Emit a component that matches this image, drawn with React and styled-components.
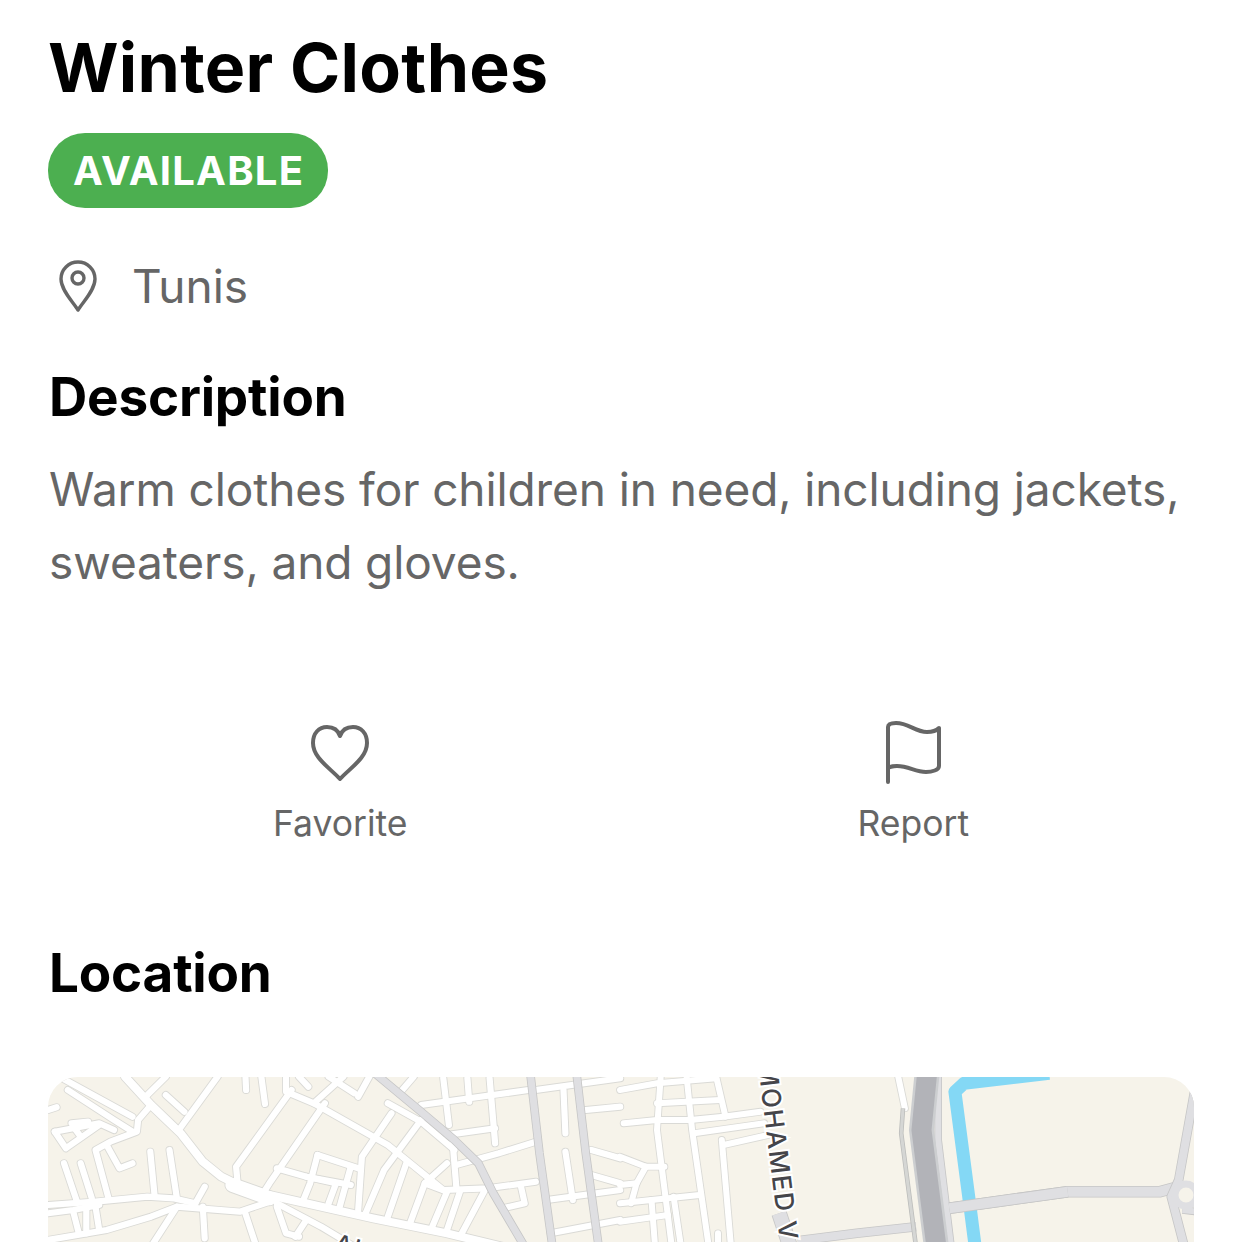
import React from 'react'
import styled, { createGlobalStyle } from 'styled-components'

const GlobalStyle = createGlobalStyle`
  html, body {
    margin: 0;
    padding: 0;
    height: 1242px;
    overflow: hidden;
    background: #fff;
    font-family: Inter, "Noto Sans", sans-serif;
  }
`

const Page = styled.div`
  height: 1242px;
  overflow: hidden;
  box-sizing: border-box;
  padding: 28px 48px 0;
`
const Title = styled.h1`
  margin: 0;
  font-size: 68px;
  line-height: 78px;
  font-weight: 700;
  letter-spacing: 0.3px;
  color: #000;
`
const Badge = styled.div`
  width: fit-content;
  margin-top: 27px;
  padding: 0 24px 0 25px;
  height: 75px;
  line-height: 75px;
  border-radius: 37px;
  background: #4caf50;
  color: #fff;
  font-size: 40px;
  font-weight: 700;
  letter-spacing: 1.2px;
`
const Place = styled.div`
  display: flex;
  align-items: center;
  gap: 35px;
  margin: 52px 0 0 11px;
  height: 52px;
  font-size: 46px;
  color: #666;
`
const Heading = styled.h2`
  margin: ${(p) => p.$top}px 0 0 1px;
  font-size: 53px;
  line-height: 60px;
  font-weight: 700;
  letter-spacing: -0.2px;
  color: #000;
`
const Body = styled.p`
  margin: 26px 0 0 1px;
  font-size: 46px;
  line-height: 72.6px;
  letter-spacing: -0.1px;
  color: #666;
`
const Actions = styled.div`
  display: flex;
  justify-content: space-around;
  margin-top: 123px;
`
const Action = styled.div`
  display: flex;
  flex-direction: column;
  align-items: center;
  gap: 17px;
  font-size: 35.5px;
  line-height: 44px;
  color: #666;
`
const ActionIcon = styled.div`
  display: flex;
  align-items: center;
  justify-content: center;
  height: 64px;
`
const MapBox = styled.div`
  margin-top: 74px;
  height: 400px;
  border-radius: 30px;
  overflow: hidden;
  background: #f6f3ea;
`
const MapSvg = styled.svg`
  display: block;
  width: 1146px;
  height: 400px;
`
const MapLabel = styled.text`
  font-family: Inter, sans-serif;
  font-size: ${(p) => p.$size}px;
  font-weight: 500;
  letter-spacing: 1.6px;
  fill: #45454a;
  stroke: #fff;
  stroke-width: 4px;
  paint-order: stroke;
`

// road polylines, in page pixels
const Z3 = (pts) => pts.map(([x, y]) => `${(40 + x * 0.37).toFixed(1)},${(1070 + y / 3).toFixed(1)}`).join(' ')
const Z4 = (pts) => pts.map(([x, y]) => `${(620 + x * 0.37).toFixed(1)},${(1070 + y / 3).toFixed(1)}`).join(' ')

const mainRoad = [[230, 20], [300, 105], [380, 190], [440, 275], [490, 320], [545, 350], [620, 375], [900, 445], [1100, 490], [1250, 530]]

const streets = [
  // left part
  mainRoad,
  [[60, 25], [250, 140]],
  [[75, 60], [200, 150], [250, 185]],
  [[300, 105], [265, 150], [262, 185], [190, 215], [150, 240], [185, 385]],
  [[340, 20], [290, 75]],
  [[480, 20], [375, 180]],
  [[340, 75], [390, 125]],
  [[555, 10], [557, 60]],
  [[597, 10], [608, 102]],
  [[22, 120], [45, 112]],
  [[40, 185], [160, 160], [200, 180]],
  [[40, 185], [70, 235], [160, 165]],
  [[85, 160], [130, 155]],
  [[90, 170], [110, 200]],
  [[180, 225], [215, 295], [250, 280]],
  [[65, 280], [100, 395]],
  [[110, 280], [140, 385]],
  [[298, 245], [310, 380]],
  [[350, 240], [370, 385]],
  [[22, 405], [150, 395], [290, 380], [360, 385], [420, 400]],
  [[22, 430], [90, 420], [160, 405]],
  [[90, 425], [105, 490]],
  [[125, 420], [125, 490]],
  [[150, 410], [160, 480]],
  [[22, 510], [180, 480], [300, 440], [370, 410], [540, 425], [620, 395]],
  [[370, 410], [300, 530]],
  [[445, 350], [420, 400]],
  [[440, 410], [445, 505]],
  [[555, 430], [585, 530]],
  [[640, 400], [760, 470], [850, 530]],
  [[640, 410], [665, 490], [700, 500]],
  [[720, 450], [690, 500]],
  [[665, 20], [665, 65], [740, 100], [820, 20]],
  [[680, 60], [530, 290], [535, 350]],
  [[770, 100], [620, 340], [600, 375]],
  [[700, 20], [725, 50]],
  [[740, 100], [940, 225], [1090, 360], [1210, 355], [1340, 335]],
  [[780, 20], [850, 70]],
  [[890, 20], [860, 80]],
  [[1010, 20], [975, 65]],
  [[940, 100], [1030, 155], [1120, 240]],
  [[950, 130], [870, 260], [860, 420]],
  [[1030, 150], [930, 300], [880, 430]],
  [[990, 280], [940, 440]],
  [[1040, 340], [1000, 460]],
  [[1100, 280], [1040, 340], [1100, 365], [1060, 470]],
  [[1135, 365], [1100, 480]],
  [[1200, 365], [1140, 490]],
  [[1115, 215], [1125, 350]],
  [[1030, 105], [1320, 60]],
  [[1090, 25], [1105, 165]],
  [[1155, 25], [1160, 95]],
  [[1215, 25], [1230, 220]],
  [[1100, 195], [1230, 175]],
  [[1125, 285], [1240, 250], [1340, 215]],
  [[750, 255], [860, 295]],
  [[750, 255], [730, 340], [710, 395]],
  [[640, 295], [720, 320], [840, 345]],
  [[720, 320], [800, 340], [780, 400]],
  [[840, 290], [810, 410]],
  [[1250, 415], [1310, 400], [1300, 350]],
  [[1340, 60], [1568, 25]],
  [[1415, 60], [1420, 190]],
  [[1420, 245], [1440, 390]],
  [[1370, 390], [1568, 360]],
  [[1380, 490], [1568, 450]],
  [[1475, 120], [1568, 110]],
  [[1490, 240], [1568, 265]],
  [[1490, 315], [1568, 340]]
]

const streetsRight = [
  [[0, 60], [100, 40], [260, 25]],
  [[110, 20], [100, 180], [140, 530]],
  [[180, 20], [195, 180], [240, 530]],
  [[260, 20], [285, 140]],
  [[10, 160], [100, 150], [190, 150], [280, 140], [380, 125]],
  [[100, 100], [270, 90]],
  [[200, 190], [390, 160]],
  [[275, 210], [300, 530]],
  [[280, 225], [400, 195]],
  [[0, 260], [70, 290], [120, 290]],
  [[70, 290], [45, 340], [30, 400]],
  [[0, 345], [45, 340]],
  [[0, 400], [215, 375]],
  [[0, 455], [130, 435]],
  [[85, 390], [95, 530]],
  [[145, 380], [165, 530]],
  [[265, 490], [265, 530]],
  [[750, 10], [770, 115]]
]

const greyRoads = [
  { pts: Z3([[905, 10], [1030, 125], [1120, 210], [1185, 280], [1225, 370], [1310, 530]]), w: 7 },
  { pts: Z3([[1325, 10], [1350, 250], [1385, 530]]), w: 7 },
  { pts: Z3([[1450, 10], [1475, 250], [1510, 530]]), w: 7 },
  { pts: Z4([[480, 512], [640, 490], [800, 470]]), w: 8 },
  { pts: Z4([[890, 415], [1210, 365], [1460, 365], [1510, 350]]), w: 10 },
  { pts: Z4([[1560, 20], [1510, 330], [1490, 380], [1525, 530]]), w: 8 },
  { pts: Z4([[1520, 420], [1560, 425]]), w: 6 },
  { pts: Z4([[860, 10], [860, 210], [895, 530]]), w: 6 },
  { pts: Z4([[430, 430], [460, 530]]), w: 14 }
]

function Road({ pts, color, casing, width }) {
  return (
    <g fill="none" strokeLinejoin="round" strokeLinecap="butt">
      <polyline points={pts} stroke={casing} strokeWidth={width + 1.6} />
      <polyline points={pts} stroke={color} strokeWidth={width} />
    </g>
  )
}

function StreetLayer({ color, extra }) {
  return (
    <g fill="none" stroke={color} strokeLinejoin="round" strokeLinecap="round">
      <polyline points={Z3(mainRoad)} strokeWidth={8 + extra} />
      <polyline points={Z3([[520, 345], [620, 385]])} strokeWidth={14 + extra} />
      {streets.map((s, i) => (
        <polyline key={i} points={Z3(s)} strokeWidth={6.2 + extra} />
      ))}
      {streetsRight.map((s, i) => (
        <polyline key={i} points={Z4(s)} strokeWidth={6 + extra} />
      ))}
    </g>
  )
}

function MapArt() {
  return (
    <MapSvg viewBox="48 1077 1146 400">
      <StreetLayer color="#dadad6" extra={1.8} />
      <StreetLayer color="#fff" extra={0} />
      {greyRoads.map((r, i) => (
        <Road key={i} pts={r.pts} color="#dfdfe2" casing="#c6c6c6" width={r.w} />
      ))}
      {/* roundabout */}
      <circle cx="1186" cy="1195" r="11" fill="#f6f3ea" stroke="#dfdfe2" strokeWidth="7" />
      {/* canal */}
      <polyline points={Z4([[1160, 10], [930, 40], [905, 65], [945, 400], [960, 530]])} fill="none" stroke="#84d8f5" strokeWidth="13" strokeLinejoin="round" />
      <Road pts={Z4([[890, 415], [1210, 365]])} color="#dfdfe2" casing="#c6c6c6" width={10} />
      {/* motorway */}
      <Road pts={Z4([[765, 115], [760, 190], [800, 530]])} color="#d5d6d4" casing="#bcbdbb" width={3} />
      <polyline points={Z4([[830, 10], [815, 180], [855, 530]])} fill="none" stroke="#ccced0" strokeWidth="25" />
      <polyline points={Z4([[830, 10], [815, 180], [855, 530]])} fill="none" stroke="#b2b3b8" strokeWidth="20" />
      <MapLabel $size={26} transform="translate(758 1064) rotate(83)">MOHAMED V</MapLabel>
      <MapLabel $size={24} transform="translate(333 1250) rotate(16)">AL</MapLabel>
    </MapSvg>
  )
}

function App() {
  return (
    <>
      <GlobalStyle />
      <Page>
        <Title>Winter Clothes</Title>
        <Badge>AVAILABLE</Badge>
        <Place>
          <svg width="38" height="52" viewBox="0 0 38 52" fill="none" stroke="#666" strokeWidth="3.4" strokeLinejoin="round">
            <path d="M19 50 C14 42 2 30 2 19 A17 17 0 0 1 36 19 C36 30 24 42 19 50Z" />
            <circle cx="19" cy="18" r="6" />
          </svg>
          <span>Tunis</span>
        </Place>
        <Heading $top={55}>Description</Heading>
        <Body>Warm clothes for children in need, including jackets, sweaters, and gloves.</Body>
        <Actions>
          <Action>
            <ActionIcon>
              <svg width="58" height="56" viewBox="0 0 58 56" fill="none" stroke="#666" strokeWidth="4" strokeLinejoin="round">
                <path d="M29 54 C19 43 2 33 2 18 C2 8 8 2 16 2 C22 2 27 5 29 11 C31 5 36 2 42 2 C50 2 56 8 56 18 C56 33 39 43 29 54Z" />
              </svg>
            </ActionIcon>
            <span>Favorite</span>
          </Action>
          <Action>
            <ActionIcon>
              <svg width="56" height="64" viewBox="0 0 56 64" fill="none" stroke="#666" strokeWidth="4" strokeLinejoin="round" strokeLinecap="round">
                <path d="M3 61 V6 C3 3 6 2 11 2 C24 2 30 11 42 11 C47 11 51 10 54 7 V45 C54 49 47 51 41 51 C30 51 24 45 12 45 C8 45 3 46 3 48" />
              </svg>
            </ActionIcon>
            <span>Report</span>
          </Action>
        </Actions>
        <Heading $top={97}>Location</Heading>
        <MapBox>
          <MapArt />
        </MapBox>
      </Page>
    </>
  )
}

export default App
